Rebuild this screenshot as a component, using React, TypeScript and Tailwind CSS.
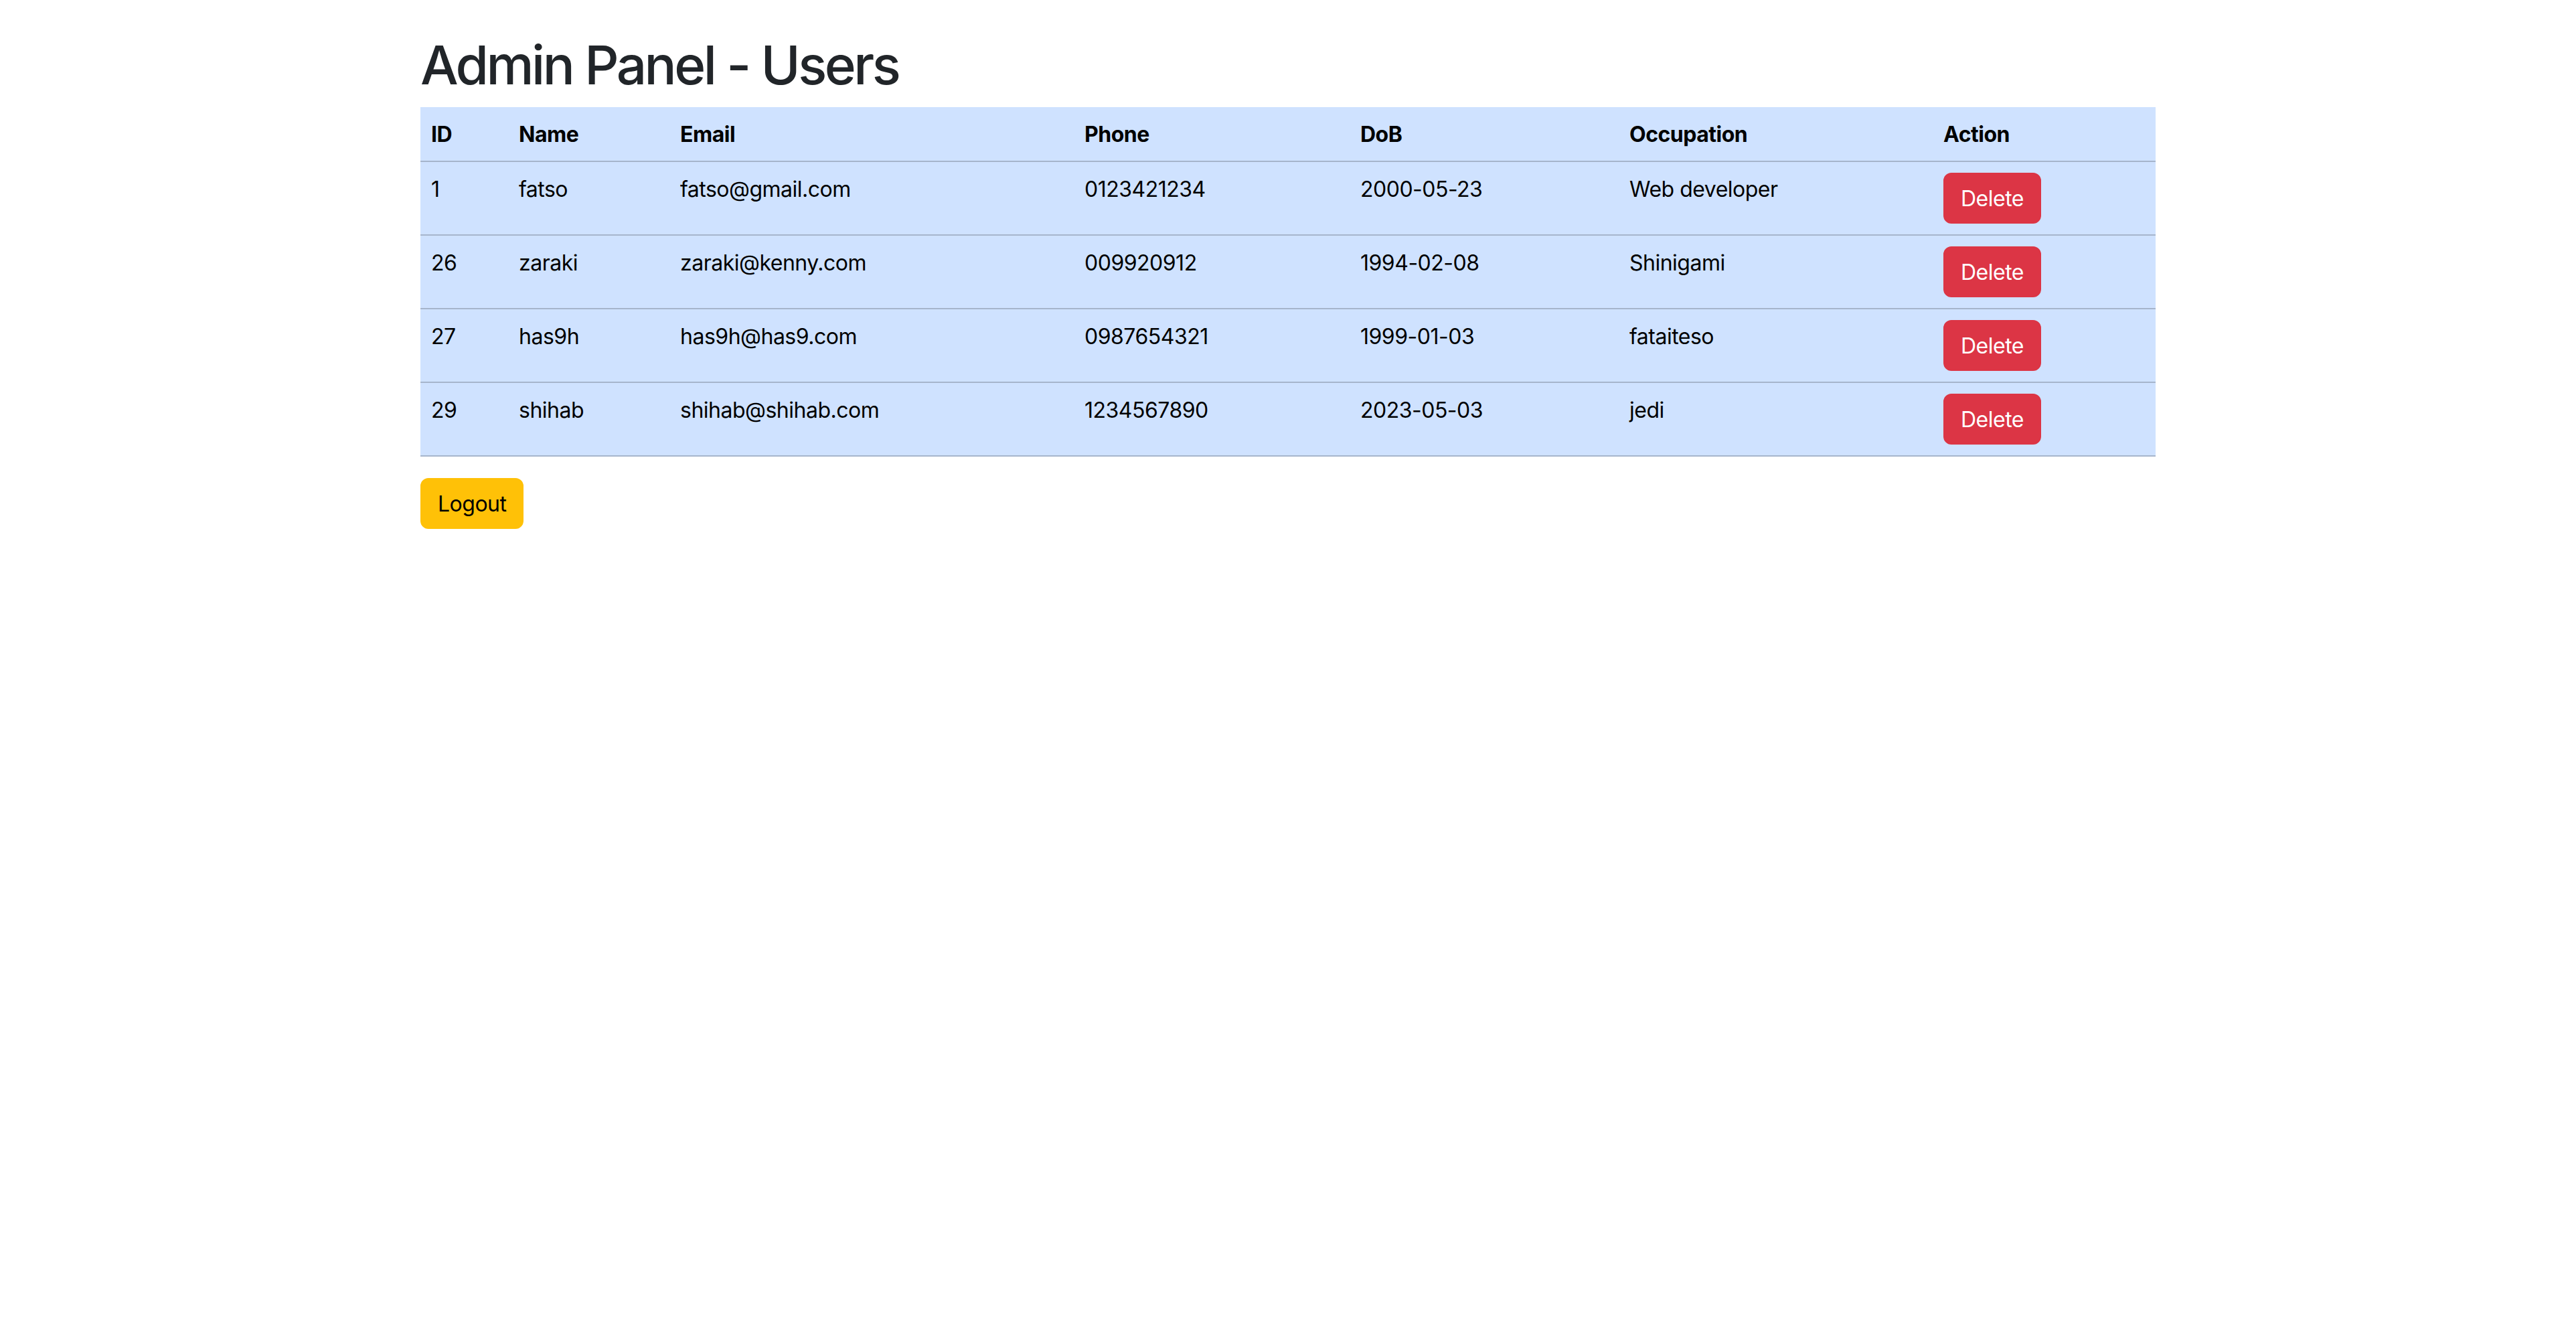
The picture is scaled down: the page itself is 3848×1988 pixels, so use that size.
const users = [
  { id: 1, name: "fatso", email: "fatso@gmail.com", phone: "0123421234", dob: "2000-05-23", occupation: "Web developer" },
  { id: 26, name: "zaraki", email: "zaraki@kenny.com", phone: "009920912", dob: "1994-02-08", occupation: "Shinigami" },
  { id: 27, name: "has9h", email: "has9h@has9.com", phone: "0987654321", dob: "1999-01-03", occupation: "fataiteso" },
  { id: 29, name: "shihab", email: "shihab@shihab.com", phone: "1234567890", dob: "2023-05-03", occupation: "jedi" },
];

const cell = "border-b-2 border-[#a6b5cc] px-[16px] pt-[17px] pb-[15px] text-left align-top";

export default function App() {
  return (
    <div className="min-h-screen w-full bg-white font-['Inter',sans-serif] text-[32px] leading-[48px] tracking-[-0.5px] text-[#212529]">
      <div className="mx-auto w-[2592px] pt-[48px]">
        <h1 className="mb-[16px] pt-[2px] pb-0 text-[80px] font-medium leading-[94px] tracking-[-3.5px] text-[#212529]">
          Admin Panel - Users
        </h1>

        <table className="mb-[32px] w-full table-fixed border-collapse bg-[#cfe2ff] text-black">
          <thead>
            <tr>
              <th className={`${cell} w-[131px] font-bold`}>ID</th>
              <th className={`${cell} w-[241px] font-bold`}>Name</th>
              <th className={`${cell} w-[604px] font-bold`}>Email</th>
              <th className={`${cell} w-[412px] font-bold`}>Phone</th>
              <th className={`${cell} w-[402px] font-bold`}>DoB</th>
              <th className={`${cell} w-[469px] font-bold`}>Occupation</th>
              <th className={`${cell} w-[333px] font-bold`}>Action</th>
            </tr>
          </thead>
          <tbody>
            {users.map((u) => (
              <tr key={u.id}>
                <td className={cell}>{u.id}</td>
                <td className={cell}>{u.name}</td>
                <td className={cell}>{u.email}</td>
                <td className={cell}>{u.phone}</td>
                <td className={cell}>{u.dob}</td>
                <td className={cell}>{u.occupation}</td>
                <td className="border-b-2 border-[#a6b5cc] px-[16px] py-[16px] text-left align-top">
                  <button className="rounded-[12px] border-2 border-[#dc3545] bg-[#dc3545] px-[24px] pt-[13px] pb-[11px] text-[32px] leading-[48px] tracking-[-0.5px] text-white">
                    Delete
                  </button>
                </td>
              </tr>
            ))}
          </tbody>
        </table>

        <button className="rounded-[12px] border-2 border-[#ffc107] bg-[#ffc107] px-[24px] pt-[13px] pb-[11px] text-[32px] leading-[48px] tracking-[-0.5px] text-black">
          Logout
        </button>
      </div>
    </div>
  );
}
